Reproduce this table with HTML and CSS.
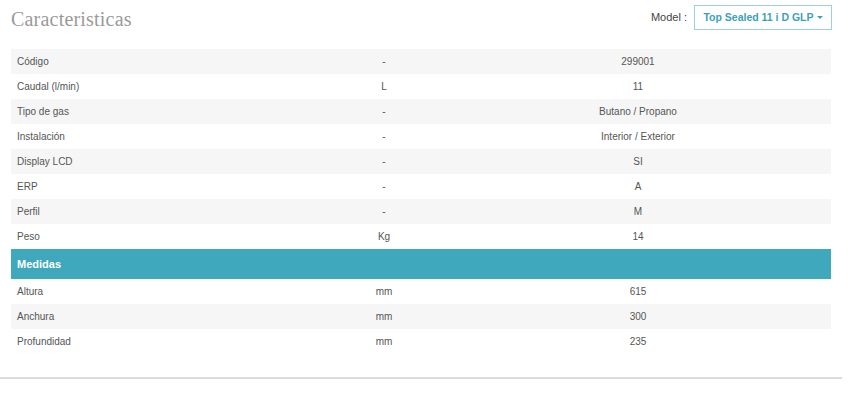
FILE: index.html
```html
<!DOCTYPE html>
<html lang="es">
<head>
<meta charset="utf-8">
<title>Características</title>
<link rel="stylesheet" href="styles.css">
</head>
<body>
<div class="page">
  <div class="head">
    <h2 class="title">Caracteristicas</h2>
    <div class="model">
      <span class="model-label">Model :</span>
      <button class="model-btn">Top Sealed 11 i D GLP <span class="caret"></span></button>
    </div>
  </div>
  <table class="specs">
    <colgroup><col class="c1"><col class="c2"><col class="c3"></colgroup>
    <tbody>
      <tr class="odd"><td>Código</td><td class="u">-</td><td class="v">299001</td></tr>
      <tr><td>Caudal (l/min)</td><td class="u">L</td><td class="v">11</td></tr>
      <tr class="odd"><td>Tipo de gas</td><td class="u">-</td><td class="v">Butano / Propano</td></tr>
      <tr><td>Instalación</td><td class="u">-</td><td class="v">Interior / Exterior</td></tr>
      <tr class="odd"><td>Display LCD</td><td class="u">-</td><td class="v">SI</td></tr>
      <tr><td>ERP</td><td class="u">-</td><td class="v">A</td></tr>
      <tr class="odd"><td>Perfil</td><td class="u">-</td><td class="v">M</td></tr>
      <tr><td>Peso</td><td class="u">Kg</td><td class="v">14</td></tr>
      <tr class="section"><td colspan="3">Medidas</td></tr>
      <tr><td>Altura</td><td class="u">mm</td><td class="v">615</td></tr>
      <tr class="odd"><td>Anchura</td><td class="u">mm</td><td class="v">300</td></tr>
      <tr><td>Profundidad</td><td class="u">mm</td><td class="v">235</td></tr>
    </tbody>
  </table>
  <div class="rule"></div>
</div>
</body>
</html>
```
FILE: styles.css
```css
html, body {
  margin: 0;
  padding: 0;
  background: #ffffff;
}
.page {
  width: 848px;
  font-family: "Liberation Sans", Arial, sans-serif;
}
.head {
  display: flex;
  justify-content: space-between;
  align-items: center;
  padding: 5px 16px 0 11px;
  height: 24px;
}
.title {
  margin: 0;
  font-family: "Liberation Serif", "Times New Roman", serif;
  font-weight: normal;
  font-size: 20px;
  color: #9a9a9a;
  letter-spacing: 0.2px;
  position: relative;
  top: 2px;
}
.model {
  display: flex;
  align-items: center;
  gap: 7px;
}
.model-label {
  font-size: 11px;
  color: #444;
}
.model-btn {
  height: 25px;
  width: 138px;
  box-sizing: border-box;
  border: 1px solid #9dd0dc;
  background: #fff;
  color: #3aa2b8;
  font-family: "Liberation Sans", Arial, sans-serif;
  font-size: 10.5px;
  font-weight: bold;
  padding: 0 8px;
  display: flex;
  align-items: center;
  justify-content: center;
  gap: 3px;
}
.caret {
  display: inline-block;
  width: 0;
  height: 0;
  border-left: 3px solid transparent;
  border-right: 3px solid transparent;
  border-top: 3px solid #3aa2b8;
}
.specs {
  margin: 20px 0 0 11px;
  width: 820px;
  border-collapse: collapse;
  table-layout: fixed;
  font-size: 10px;
  color: #555;
}
.c1 { width: 312px; }
.c2 { width: 122px; }
.c3 { width: 386px; }
.specs td {
  height: 25px;
  padding: 0 6px;
  box-sizing: border-box;
  vertical-align: middle;
}
.specs td.u, .specs td.v {
  text-align: center;
}
.specs tr.odd td {
  background: #f6f6f6;
}
.specs tr.section td {
  height: 30px;
  background: #40a8bc;
  color: #fff;
  font-weight: bold;
  font-size: 11px;
}
.rule {
  margin-top: 23px;
  width: 842px;
  height: 2px;
  background: #dcdcdc;
}
```
